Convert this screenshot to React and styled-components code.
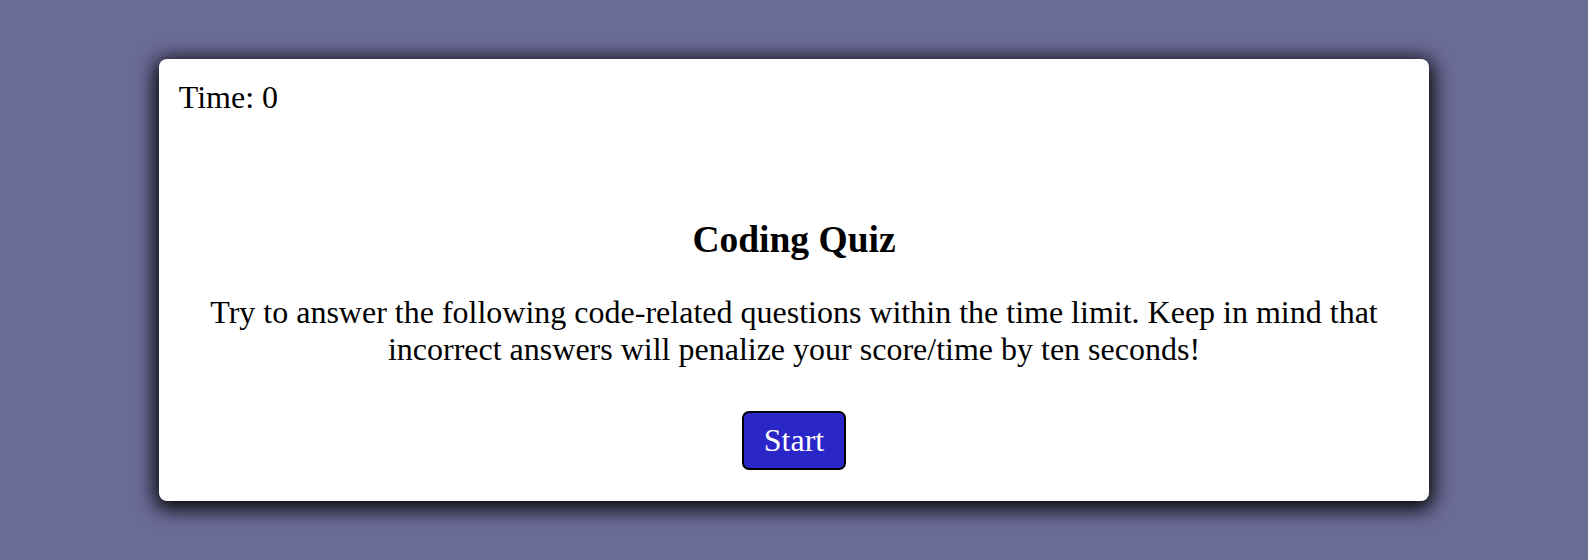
import React, { useState } from "react";
import styled, { createGlobalStyle } from "styled-components";

const GlobalStyle = createGlobalStyle`
  body {
    margin: 0;
    padding-top: 59px;
    min-height: 100vh;
    box-sizing: border-box;
    background-color: #6b6b98;
    font-family: "Liberation Serif", "Times New Roman", serif;
  }
`;

const App = () => {
  const [time] = useState(0);

  return (
    <>
      <GlobalStyle />
      <QuizCard>
        <Timer>Time: {time}</Timer>
        <StartScreen>
          <Title>Coding Quiz</Title>
          <Description>
            Try to answer the following code-related questions within the time
            limit. Keep in mind that incorrect answers will penalize your
            score/time by ten seconds!
          </Description>
          <StartButton type="button">Start</StartButton>
        </StartScreen>
      </QuizCard>
    </>
  );
};

const QuizCard = styled.main`
  width: 80%;
  margin: 0 auto;
  padding: 20px 20px 31px;
  box-sizing: border-box;
  display: flex;
  flex-direction: column;
  background-color: #fff;
  border-radius: 8px;
  box-shadow: 0 4px 20px 4px #000;
`;

const Timer = styled.p`
  margin: 0;
  font-size: 32px;
  color: #000;
`;

const StartScreen = styled.section`
  display: flex;
  flex-direction: column;
  align-items: center;
  text-align: center;
`;

const Title = styled.h1`
  margin: 102px 0 33px;
  font-size: 37.5px;
  font-weight: bold;
`;

const Description = styled.p`
  margin: 0 0 43px;
  font-size: 32px;
`;

const StartButton = styled.button`
  padding: 9px 20px;
  font-family: inherit;
  font-size: 32px;
  color: #fff;
  background-color: #2a26c8;
  border: 2px solid #000;
  border-radius: 7px;
  cursor: pointer;
`;

export default App;
